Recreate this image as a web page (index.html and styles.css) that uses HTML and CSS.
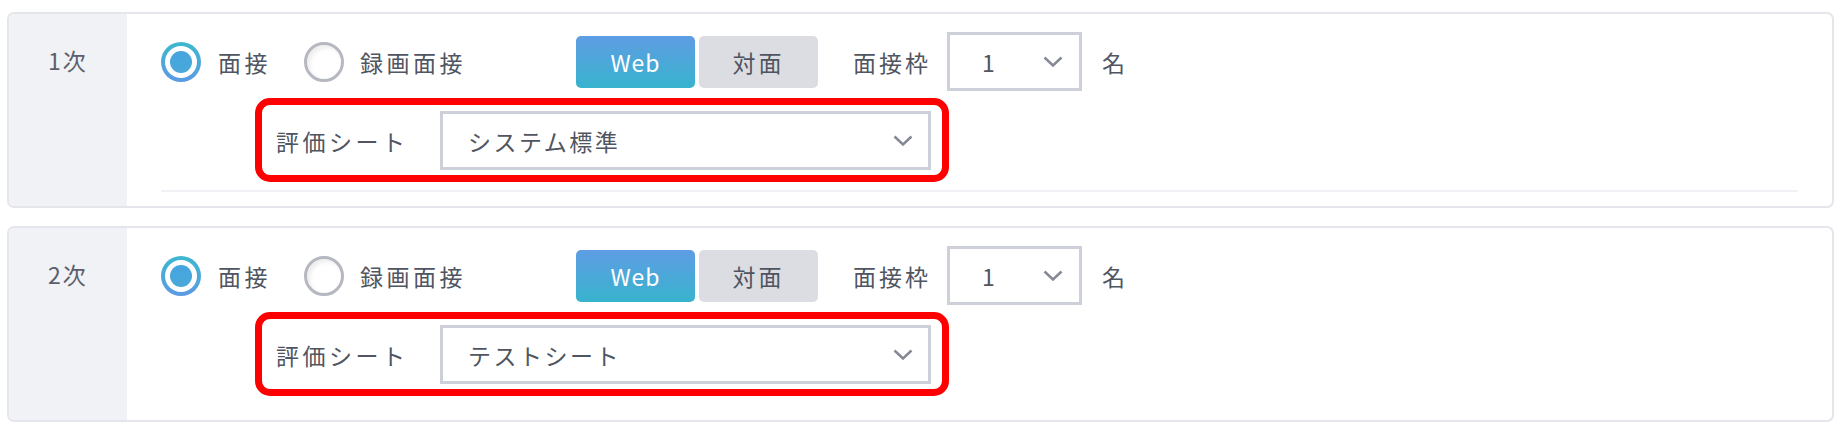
FILE: index.html
```html
<!DOCTYPE html>
<html lang="ja">
<head>
  <meta charset="UTF-8" />
  <title>選考ステップ</title>
  <link rel="stylesheet" href="styles.css">
</head>
<body>

  <div class="steps">

    <!-- 1次 -->
    <section class="step">
      <div class="step-label">1次</div>
      <div class="step-body">
        <div class="row">
          <div class="mode">
            <label class="choice first"><span class="radio on"></span>面接</label>
            <label class="choice"><span class="radio"></span>録画面接</label>
          </div>
          <div class="toggle">
            <span class="toggle-btn active">Web</span>
            <span class="toggle-btn">対面</span>
          </div>
          <span class="field-label">面接枠</span>
          <div class="select small">
            <span>1</span>
            <svg class="chev" viewBox="0 0 20 11"><polyline points="1.5,1.5 10,9.5 18.5,1.5" /></svg>
          </div>
          <span class="unit">名</span>
        </div>

        <div class="highlight">
          <span class="sheet-label">評価シート</span>
          <div class="select wide">
            <span>システム標準</span>
            <svg class="chev" viewBox="0 0 20 11"><polyline points="1.5,1.5 10,9.5 18.5,1.5" /></svg>
          </div>
        </div>

        <div class="divider"></div>
      </div>
    </section>

    <!-- 2次 -->
    <section class="step">
      <div class="step-label">2次</div>
      <div class="step-body">
        <div class="row">
          <div class="mode">
            <label class="choice first"><span class="radio on"></span>面接</label>
            <label class="choice"><span class="radio"></span>録画面接</label>
          </div>
          <div class="toggle">
            <span class="toggle-btn active">Web</span>
            <span class="toggle-btn">対面</span>
          </div>
          <span class="field-label">面接枠</span>
          <div class="select small">
            <span>1</span>
            <svg class="chev" viewBox="0 0 20 11"><polyline points="1.5,1.5 10,9.5 18.5,1.5" /></svg>
          </div>
          <span class="unit">名</span>
        </div>

        <div class="highlight">
          <span class="sheet-label">評価シート</span>
          <div class="select wide">
            <span>テストシート</span>
            <svg class="chev" viewBox="0 0 20 11"><polyline points="1.5,1.5 10,9.5 18.5,1.5" /></svg>
          </div>
        </div>

        <div class="divider last"></div>
      </div>
    </section>

  </div>

</body>
</html>
```

FILE: styles.css
```css
* { box-sizing: border-box; }

body {
  margin: 0;
  padding: 12px 6px 0 7px;
  background: #fff;
  font-family: 'Noto Sans CJK JP', 'Noto Sans', sans-serif;
  font-size: 23px;
  color: #4f5561;
  letter-spacing: 3.5px;
}

.step {
  display: flex;
  background: #fff;
  border: 2px solid #e5e6eb;
  border-radius: 7px;
  overflow: hidden;
  margin-bottom: 18px;
}

.step-label {
  flex: none;
  width: 118px;
  background: #f1f2f5;
  padding: 31px 0 0 39px;
  line-height: 30px;
  color: #5a5f6b;
  letter-spacing: 2px;
}

.step-body {
  flex: 1;
  padding: 18px 34px 14px 34px;
}

.row {
  display: flex;
  align-items: center;
  height: 59px;
}

.mode {
  display: flex;
  align-items: center;
  width: 415px;
}

.choice {
  display: flex;
  align-items: center;
  gap: 17px;
  line-height: 30px;
}

.choice.first {
  width: 143px;
}

.choice + .choice {
  gap: 16px;
}

.radio {
  flex: none;
  width: 40px;
  height: 40px;
  border-radius: 50%;
  border: 3px solid #b5b8c1;
  background: #fff;
  box-shadow: inset 3px 3px 4px rgba(0, 0, 0, 0.07);
  display: flex;
  align-items: center;
  justify-content: center;
}

.radio.on {
  border: 4px solid transparent;
  background:
    linear-gradient(#fff, #fff) padding-box,
    linear-gradient(to bottom, #3cb8d0, #5c9ae3) border-box;
  box-shadow: none;
}

.radio.on::after {
  content: '';
  width: 22px;
  height: 22px;
  border-radius: 50%;
  background: linear-gradient(to bottom, #45a4df, #4aa9d8);
}

.toggle {
  display: flex;
  gap: 4px;
}

.toggle-btn {
  width: 119px;
  height: 52px;
  border-radius: 5px;
  background: #dcdde2;
  display: flex;
  align-items: center;
  justify-content: center;
  color: #4f5460;
  letter-spacing: 3px;
}

.toggle-btn.active {
  background: linear-gradient(to bottom, #5e9de4, #38b3cd);
  color: #fff;
  letter-spacing: 1px;
}

.field-label {
  margin-left: 35px;
  width: 94px;
  white-space: nowrap;
  letter-spacing: 3px;
}

.select {
  display: flex;
  align-items: center;
  justify-content: space-between;
  height: 59px;
  border: 3px solid #cdd0d8;
  background: #fff;
}

.select.small {
  width: 135px;
  padding: 0 16px 0 32px;
}

.select.wide {
  width: 491px;
  padding: 0 15px 0 25px;
  letter-spacing: 2.5px;
}

.chev {
  width: 20px;
  height: 11px;
}

.chev polyline {
  fill: none;
  stroke: #858995;
  stroke-width: 2.5;
}

.unit {
  margin-left: 20px;
}

/* annotation frame */
.highlight {
  display: flex;
  align-items: center;
  width: 694px;
  margin: 7px 0 0 94px;
  padding: 6px 10px 5px 14px;
  border: 7px solid #ff0000;
  border-radius: 15px;
}

.sheet-label {
  flex: none;
  width: 164px;
  letter-spacing: 3.5px;
}

.divider {
  height: 2px;
  margin-top: 8px;
  background: #f0f1f4;
}

.divider.last {
  background: transparent;
}
```
